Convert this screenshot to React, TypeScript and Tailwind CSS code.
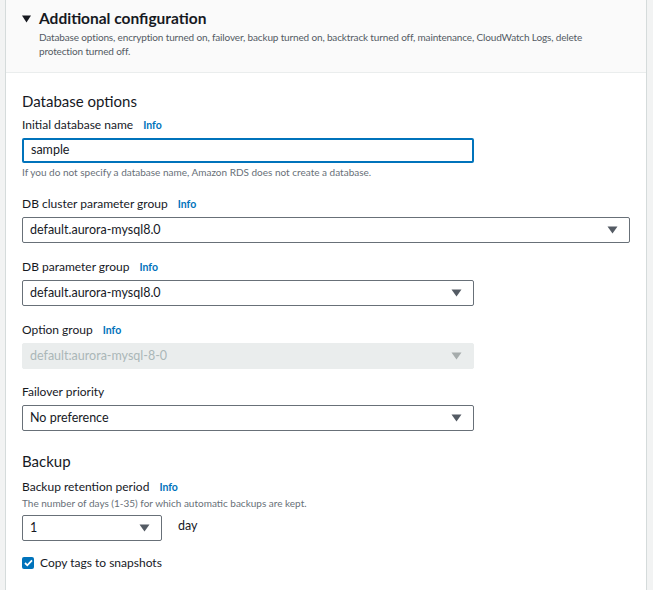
import React from "react";

const font = { fontFamily: 'Lato, "Open Sans", sans-serif' };

const Caret = ({ disabled = false }: { disabled?: boolean }) => (
  <svg width="11" height="8" viewBox="0 0 11 8" className="shrink-0">
    <path d="M0.5 0.5h10L5.5 7.5z" fill={disabled ? "#a6acac" : "#545b64"} />
  </svg>
);

const Info = () => <span className="ml-[10px] text-[10.5px] font-bold text-[#0073bb]">Info</span>;

const Label = ({ children, info = false }: { children: React.ReactNode; info?: boolean }) => (
  <div className="flex items-baseline text-[12px] leading-[16px] text-[#16191f]">
    {children}
    {info && <Info />}
  </div>
);

const Select = ({
  value,
  width,
  disabled = false,
}: {
  value: string;
  width: string;
  disabled?: boolean;
}) => (
  <div
    className={`mt-[5px] flex h-[26px] items-center justify-between rounded-[2px] border px-[7px] pr-[11px] text-[12.5px] ${width} ${
      disabled
        ? "border-[#eaeded] bg-[#eaeded] text-[#aab7b8]"
        : "border-[#687078] bg-white text-[#16191f]"
    }`}
  >
    <span>{value}</span>
    <Caret disabled={disabled} />
  </div>
);

export default function App() {
  return (
    <div className="flex h-[590px] w-[653px] bg-[#f2f3f3]" style={font}>
      <div className="ml-[5px] mr-[6px] flex-1 overflow-hidden border-x border-[#d5dbdb] bg-white">
        {/* expandable section header */}
        <div className="h-[73px] border-b border-[#eaeded] bg-[#fafafa] px-[16px] pt-[8px]">
          <div className="flex items-center">
            <svg width="9" height="8" viewBox="0 0 9 8" className="mr-[8px]">
              <path d="M0 0.5h9L4.5 7.5z" fill="#16191f" />
            </svg>
            <span className="text-[15.5px] font-bold leading-[21px] text-[#16191f]">
              Additional configuration
            </span>
          </div>
          <p className="ml-[17px] mt-[1px] text-[10px] leading-[14px] tracking-[-0.15px] text-[#545b64]">
            Database options, encryption turned on, failover, backup turned on, backtrack turned off,
            maintenance, CloudWatch Logs, delete
            <br />
            protection turned off.
          </p>
        </div>

        <div className="px-[16px] pt-[18px]">
          <h3 className="text-[15px] leading-[20px] text-[#16191f]">Database options</h3>

          <div className="mt-[6px]">
            <Label info>Initial database name</Label>
            <div className="mt-[5px] flex h-[25px] w-[452px] items-center rounded-[2px] border-2 border-[#0073bb] px-[7px] text-[12.5px] text-[#16191f]">
              sample
            </div>
            <p className="mt-[2px] text-[10px] leading-[14px] text-[#687078]">
              If you do not specify a database name, Amazon RDS does not create a database.
            </p>
          </div>

          <div className="mt-[17px]">
            <Label info>DB cluster parameter group</Label>
            <Select value="default.aurora-mysql8.0" width="w-[608px]" />
          </div>

          <div className="mt-[16px]">
            <Label info>DB parameter group</Label>
            <Select value="default.aurora-mysql8.0" width="w-[452px]" />
          </div>

          <div className="mt-[16px]">
            <Label info>Option group</Label>
            <Select value="default:aurora-mysql-8-0" width="w-[452px]" disabled />
          </div>

          <div className="mt-[15px]">
            <Label>Failover priority</Label>
            <Select value="No preference" width="w-[452px]" />
          </div>

          <h3 className="mt-[20px] text-[15px] leading-[20px] text-[#16191f]">Backup</h3>

          <div className="mt-[8px]">
            <Label info>Backup retention period</Label>
            <p className="mt-[1px] text-[10px] leading-[14px] text-[#687078]">
              The number of days (1-35) for which automatic backups are kept.
            </p>
            <div className="flex items-start">
              <Select value="1" width="w-[140px]" />
              <span className="ml-[16px] mt-[7px] text-[12.5px] text-[#16191f]">day</span>
            </div>
          </div>

          <label className="mt-[13px] flex items-center text-[12px] text-[#16191f]">
            <span className="mr-[6px] flex h-[12px] w-[12px] items-center justify-center rounded-[2px] bg-[#0073bb]">
              <svg width="9" height="8" viewBox="0 0 9 8">
                <path d="M1 4l2.3 2.3L8 1.3" fill="none" stroke="white" strokeWidth="1.8" />
              </svg>
            </span>
            Copy tags to snapshots
          </label>
        </div>
      </div>
    </div>
  );
}
